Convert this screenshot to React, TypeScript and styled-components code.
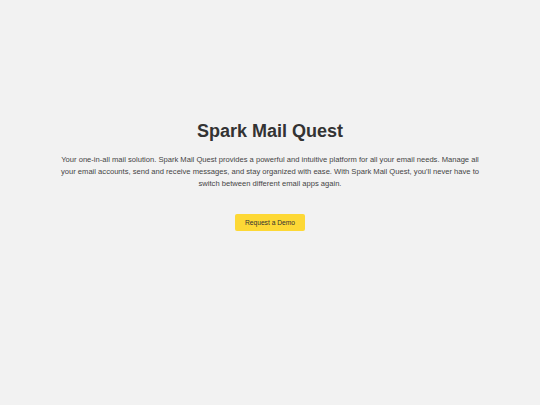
import React from 'react';
import styled, { createGlobalStyle } from 'styled-components';

const GlobalStyle = createGlobalStyle`
  html, body {
    margin: 0;
    padding: 0;
    background: #f2f2f2;
    font-family: "Liberation Sans", Arial, sans-serif;
  }
`;

const Page = styled.div`
  min-height: 405px;
  display: flex;
  flex-direction: column;
  align-items: center;
  padding-top: 120px;
  box-sizing: border-box;
`;

const Title = styled.h1`
  margin: 0 0 12px 0;
  font-size: 18px;
  line-height: 22px;
  font-weight: 700;
  color: #333333;
`;

const Intro = styled.p`
  margin: 0 0 24px 0;
  max-width: 424px;
  font-size: 7.6px;
  line-height: 12px;
  color: #444444;
  text-align: center;
`;

const DemoButton = styled.button`
  width: 70px;
  height: 17px;
  padding: 0;
  border: none;
  border-radius: 2px;
  background: #fdd835;
  color: #333333;
  font-family: inherit;
  font-size: 6.7px;
  cursor: pointer;
`;

export default function App() {
  return (
    <>
      <GlobalStyle />
      <Page>
        <Title>Spark Mail Quest</Title>
        <Intro>
          Your one-in-all mail solution. Spark Mail Quest provides a powerful and intuitive platform for all your
          email needs. Manage all your email accounts, send and receive messages, and stay organized with ease.
          With Spark Mail Quest, you'll never have to switch between different email apps again.
        </Intro>
        <DemoButton>Request a Demo</DemoButton>
      </Page>
    </>
  );
}
